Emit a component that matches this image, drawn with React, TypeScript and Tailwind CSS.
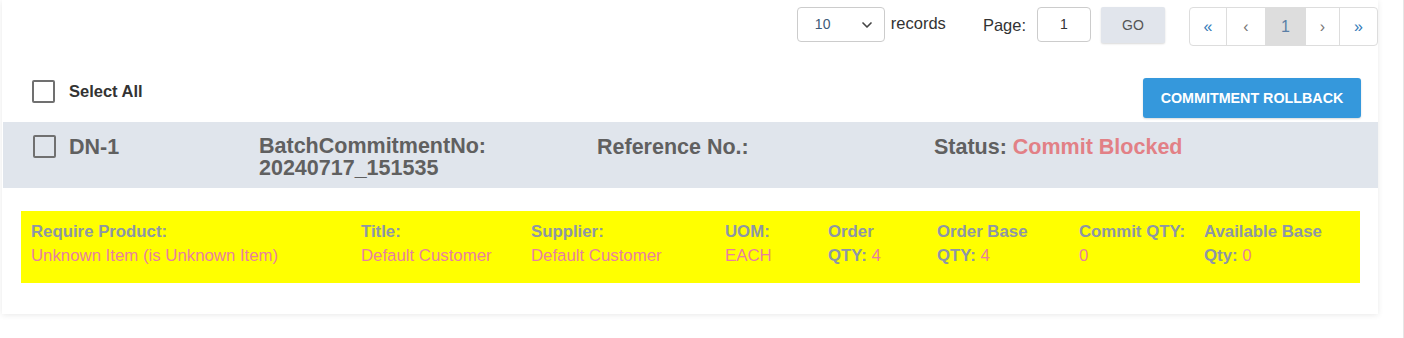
import React from 'react';
import { ChevronDown } from 'lucide-react';

const FONT = { fontFamily: '"Liberation Sans", Arial, Helvetica, sans-serif' };

interface Field {
  label: string;
  second?: string;
  value: string;
  width: string;
}

const fields: Field[] = [
  { label: 'Require Product:', value: 'Unknown Item (is Unknown Item)', width: 'w-[330px]' },
  { label: 'Title:', value: 'Default Customer', width: 'w-[170px]' },
  { label: 'Supplier:', value: 'Default Customer', width: 'w-[194px]' },
  { label: 'UOM:', value: 'EACH', width: 'w-[103px]' },
  { label: 'Order', second: 'QTY:', value: '4', width: 'w-[109px]' },
  { label: 'Order Base', second: 'QTY:', value: '4', width: 'w-[142px]' },
  { label: 'Commit QTY:', value: '0', width: 'w-[125px]' },
  { label: 'Available Base', second: 'Qty:', value: '0', width: 'flex-1' },
];

const Checkbox = ({ className = '' }: { className?: string }) => (
  <div className={`w-[23px] h-[23px] border-2 border-[#707070] rounded-[2px] shrink-0 ${className}`} />
);

const Pager = () => {
  const cell = 'h-full flex items-center justify-center border-l border-[#dddddd] first:border-l-0';
  return (
    <div className="flex h-[39px] border border-[#dddddd] rounded-[4px] overflow-hidden text-[16px] bg-white">
      <div className={`${cell} w-[36px] text-[#337ab7]`}>«</div>
      <div className={`${cell} w-[39px] text-[#777777]`}>‹</div>
      <div className={`${cell} w-[40px] bg-[#dddddd] text-[#5a7fa6]`}>1</div>
      <div className={`${cell} w-[34px] text-[#777777]`}>›</div>
      <div className={`${cell} w-[38px] text-[#337ab7]`}>»</div>
    </div>
  );
};

export default function App() {
  return (
    <div className="w-[1404px] h-[338px] bg-white border-r border-[#e6e6e6] overflow-hidden" style={FONT}>
      <div className="ml-[2px] w-[1376px] bg-white shadow-[0_1px_6px_rgba(0,0,0,0.09)] pb-[31px]">
        {/* toolbar */}
        <div className="flex items-start justify-end pt-[7px] text-[16.5px] text-[#333333]">
          <div className="w-[88px] h-[35px] border border-[#cccccc] rounded-[4px] flex items-center justify-between pl-[17px] pr-[9px]">
            <span className="text-[14px] text-[#3d5a78]">10</span>
            <ChevronDown size={16} strokeWidth={2.5} className="text-[#444444]" />
          </div>
          <span className="ml-[6px] mt-[6px] leading-[20px]">records</span>
          <span className="ml-[37px] mt-[8px] leading-[20px]">Page:</span>
          <div className="ml-[11px] w-[54px] h-[35px] border border-[#cccccc] rounded-[4px] flex items-center justify-center text-[14px]">1</div>
          <button className="ml-[10px] w-[64px] h-[36px] bg-[#e1e5ec] rounded-[2px] shadow-[0_1px_2px_rgba(0,0,0,0.15)] text-[14px] text-[#555555]">GO</button>
          <div className="ml-[24px]">
            <Pager />
          </div>
        </div>

        {/* select all + action */}
        <div className="flex items-start justify-between mt-[32px]">
          <div className="flex items-center pl-[30px] pt-[1px]">
            <Checkbox />
            <span className="ml-[14px] text-[16.5px] font-bold text-[#333333]">Select All</span>
          </div>
          <button className="mr-[17px] w-[218px] h-[40px] pt-[2px] bg-[#3598dc] rounded-[3px] shadow-[0_1px_2px_rgba(0,0,0,0.15)] text-white font-bold text-[14.3px]">
            COMMITMENT ROLLBACK
          </button>
        </div>

        {/* header row */}
        <div className="mt-[4px] ml-[1px] h-[66px] bg-[#e0e5ec] flex items-start pl-[30px] pt-[13px] text-[21.5px] leading-[22px] font-bold text-[#606060]">
          <Checkbox />
          <div className="ml-[13px] w-[190px] mt-[1px]">DN-1</div>
          <div className="w-[338px] mt-[1px]">
            <div className="leading-[21px]">BatchCommitmentNo:</div>
            <div className="leading-[22px]">20240717_151535</div>
          </div>
          <div className="w-[337px] mt-[1px]">Reference No.:</div>
          <div className="mt-[1px]">
            Status: <span className="text-[#e28086]">Commit Blocked</span>
          </div>
        </div>

        {/* detail */}
        <div className="mt-[23px] ml-[19px] mr-[18px] h-[72px] bg-[#ffff00] flex pl-[10px] pt-[9px] text-[16.8px] leading-[24px]">
          {fields.map((f) => (
            <div key={f.label} className={f.width}>
              <div className="font-bold text-[#8d96a6]">{f.label}</div>
              <div className="text-[#e97fa0]">
                {f.second && <span className="font-bold text-[#8d96a6]">{f.second} </span>}
                {f.value}
              </div>
            </div>
          ))}
        </div>
      </div>
    </div>
  );
}
